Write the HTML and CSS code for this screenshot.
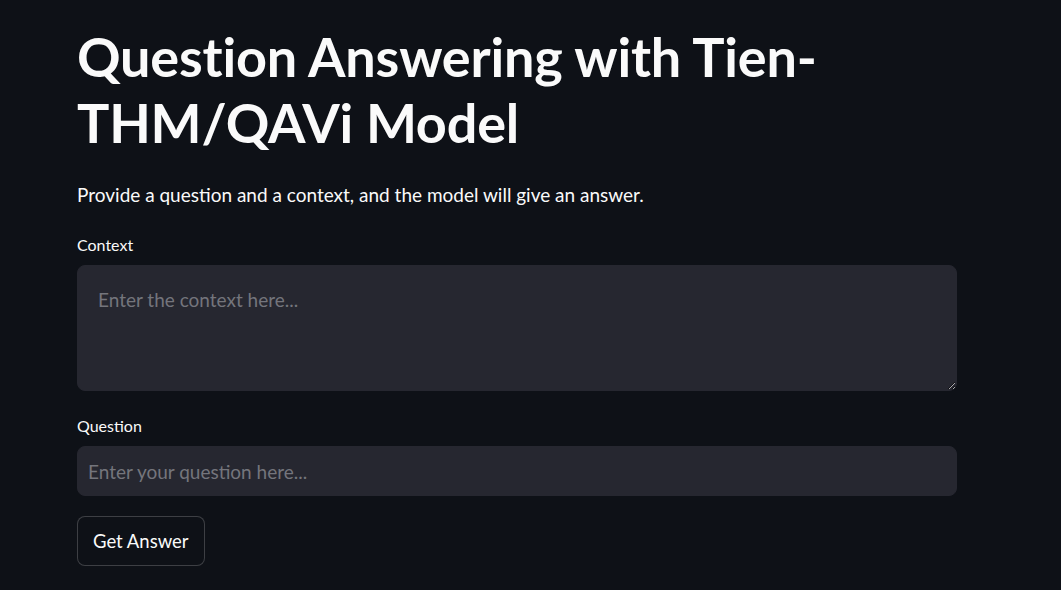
FILE: index.html
```html
<!DOCTYPE html>
<html lang="en">
<head>
<meta charset="utf-8">
<title>Question Answering</title>
<link rel="stylesheet" href="styles.css">
</head>
<body>
<main class="main">
  <h1 class="title">Question Answering with Tien-<br>THM/QAVi Model</h1>
  <p class="lead">Provide a question and a context, and the model will give an answer.</p>
  <div class="field">
    <label class="label" for="ctx">Context</label>
    <textarea id="ctx" class="textarea" placeholder="Enter the context here..."></textarea>
  </div>
  <div class="field">
    <label class="label" for="q">Question</label>
    <input id="q" class="input" type="text" placeholder="Enter your question here...">
  </div>
  <button class="btn" type="button">Get Answer</button>
</main>
</body>
</html>
```
FILE: styles.css
```css
html, body {
  margin: 0;
  padding: 0;
  background: #0e1117;
  color: #fafafa;
  font-family: Lato, "Noto Sans", sans-serif;
  color-scheme: dark;
}
.main {
  width: 880px;
  padding: 24px 0 0 77px;
  display: flex;
  flex-direction: column;
  align-items: flex-start;
}
.title {
  margin: 0;
  font-size: 54px;
  line-height: 66px;
  font-weight: 700;
  letter-spacing: -0.2px;
}
.lead {
  margin: 25px 0 0;
  font-size: 19px;
  line-height: 27px;
}
.field {
  display: flex;
  flex-direction: column;
  width: 100%;
  gap: 10px;
  margin-top: 27px;
}
.field + .field { margin-top: 25px; }
.label {
  font-size: 16px;
  line-height: 20px;
}
.textarea, .input {
  box-sizing: border-box;
  width: 100%;
  background: #262730;
  border: 1px solid #262730;
  border-radius: 8px;
  color: #fafafa;
  font-family: inherit;
  font-size: 19px;
  outline: none;
}
.textarea {
  height: 126px;
  padding: 22px 20px;
  resize: vertical;
  line-height: 24px;
}
.input {
  height: 50px;
  padding: 0 10px;
}
.textarea::placeholder, .input::placeholder {
  color: #74757c;
}
.btn {
  margin-top: 20px;
  height: 50px;
  padding: 0 15px;
  background: #0e1117;
  border: 1px solid rgba(250, 250, 250, 0.2);
  border-radius: 8px;
  color: #fafafa;
  font-family: inherit;
  font-size: 18.5px;
}
```
